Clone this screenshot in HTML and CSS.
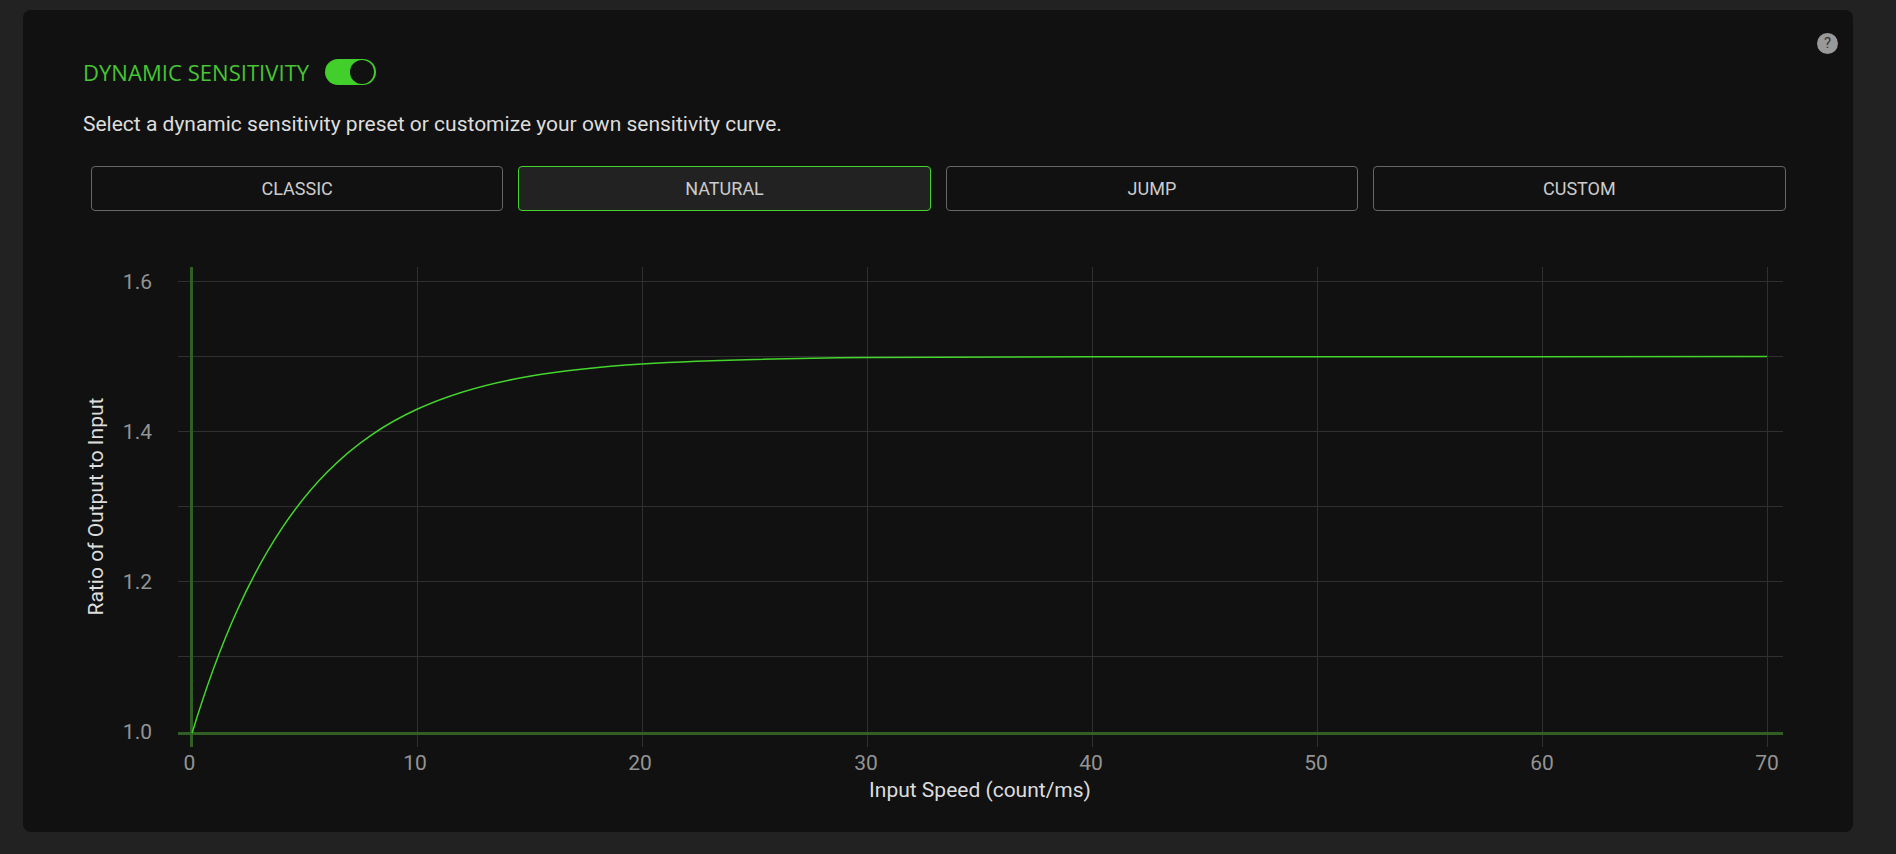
FILE: index.html
```html
<!DOCTYPE html>
<html lang="en">
<head>
<meta charset="utf-8">
<title>Dynamic Sensitivity</title>
<link rel="stylesheet" href="styles.css">
</head>
<body>
<main class="panel">
  <span class="help">?</span>
  <div class="heading-row">
    <h2 class="heading">DYNAMIC SENSITIVITY</h2>
    <span class="toggle"><span class="knob"></span></span>
  </div>
  <p class="desc">Select a dynamic sensitivity preset or customize your own sensitivity curve.</p>
  <div class="presets">
    <div class="preset">CLASSIC</div>
    <div class="preset active">NATURAL</div>
    <div class="preset">JUMP</div>
    <div class="preset">CUSTOM</div>
  </div>
  <svg class="chart" width="1830" height="592" viewBox="23 240 1830 592">
    <g class="grid">
      <path d="M178 281.5H1783M178 356.5H1783M178 431.5H1783M178 506.5H1783M178 581.5H1783M178 656.5H1783"/>
      <path d="M417.5 267V747M642.5 267V747M867.5 267V747M1092.5 267V747M1317.5 267V747M1542.5 267V747M1767.5 267V747"/>
    </g>
    <path class="axis" d="M191.5 267V747M178 733.5H1783"/>
    <path class="curve" d="M192 733.3C207 683.9 222 644 237 610.7C252 577.4 267 550.6 282 528.1C297 505.6 312 487.5 327 472.3C342 457.1 357 444.8 372 434.6C387 424.4 402 416.2 417 409.3C454.5 392 492 382.75 529.5 376.3C567 369.85 604.5 366.4 642 364C717 359.2 792 358.3 867 357.6L1092 356.8L1767 356.6"/>
    <g class="ticks ticks-y">
      <text x="152" y="289">1.6</text>
      <text x="152" y="439">1.4</text>
      <text x="152" y="589">1.2</text>
      <text x="152" y="739">1.0</text>
    </g>
    <g class="ticks ticks-x">
      <text x="189.5" y="770">0</text>
      <text x="415" y="770">10</text>
      <text x="640" y="770">20</text>
      <text x="866" y="770">30</text>
      <text x="1091" y="770">40</text>
      <text x="1316" y="770">50</text>
      <text x="1542" y="770">60</text>
      <text x="1767" y="770">70</text>
    </g>
    <text class="title" x="980" y="797">Input Speed (count/ms)</text>
    <text class="title" transform="translate(103 506.5) rotate(-90)">Ratio of Output to Input</text>
  </svg>
</main>
</body>
</html>
```
FILE: styles.css
```css
html, body {
  margin: 0;
  height: 854px;
  overflow: hidden;
  background: #222;
}
.panel {
  position: relative;
  box-sizing: border-box;
  width: 1830px;
  height: 822px;
  margin: 10px 0 0 23px;
  padding-top: 48px;
  background: #111;
  border-radius: 8px;
  font-family: Roboto, sans-serif;
}
.help {
  position: absolute;
  top: 23px;
  left: 1794px;
  width: 21px;
  height: 21px;
  border-radius: 50%;
  background: #999;
  color: #333;
  font-size: 15px;
  line-height: 21px;
  text-align: center;
}
.heading-row {
  display: flex;
  align-items: center;
  gap: 16px;
  height: 28px;
  padding-left: 60px;
}
.heading {
  margin: 0;
  font-family: "Open Sans", sans-serif;
  font-size: 22px;
  font-weight: 400;
  letter-spacing: 0.05px;
  color: #47c532;
  white-space: nowrap;
}
.toggle {
  display: flex;
  align-items: center;
  justify-content: flex-end;
  box-sizing: border-box;
  width: 51px;
  height: 26px;
  padding-right: 2px;
  border-radius: 13px;
  background: #42cf2b;
}
.knob {
  width: 24px;
  height: 24px;
  border-radius: 50%;
  background: #111;
}
.desc {
  margin: 24px 0 0;
  padding-left: 60px;
  font-size: 21px;
  line-height: 28px;
  color: #ddd;
}
.presets {
  display: grid;
  grid-template-columns: repeat(4, 1fr);
  gap: 15.1px;
  margin: 28px 67.5px 0 68px;
}
.preset {
  box-sizing: border-box;
  height: 45px;
  border: 1px solid #666;
  border-radius: 4px;
  font-size: 18px;
  line-height: 43px;
  text-align: center;
  color: #ccc;
}
.preset.active {
  border-color: #44d62c;
  background: #222;
}
.chart {
  display: block;
  margin-top: 29px;
}
.grid path {
  fill: none;
  stroke: #303030;
  stroke-width: 1;
}
.axis {
  fill: none;
  stroke: #2f5f23;
  stroke-width: 3;
}
.curve {
  fill: none;
  stroke: #44d62c;
  stroke-width: 1.5;
}
.ticks text {
  font-size: 21px;
  fill: #949494;
}
.ticks-y text {
  text-anchor: end;
}
.ticks-x text {
  text-anchor: middle;
}
.title {
  font-size: 21px;
  fill: #ddd;
  text-anchor: middle;
}
```
